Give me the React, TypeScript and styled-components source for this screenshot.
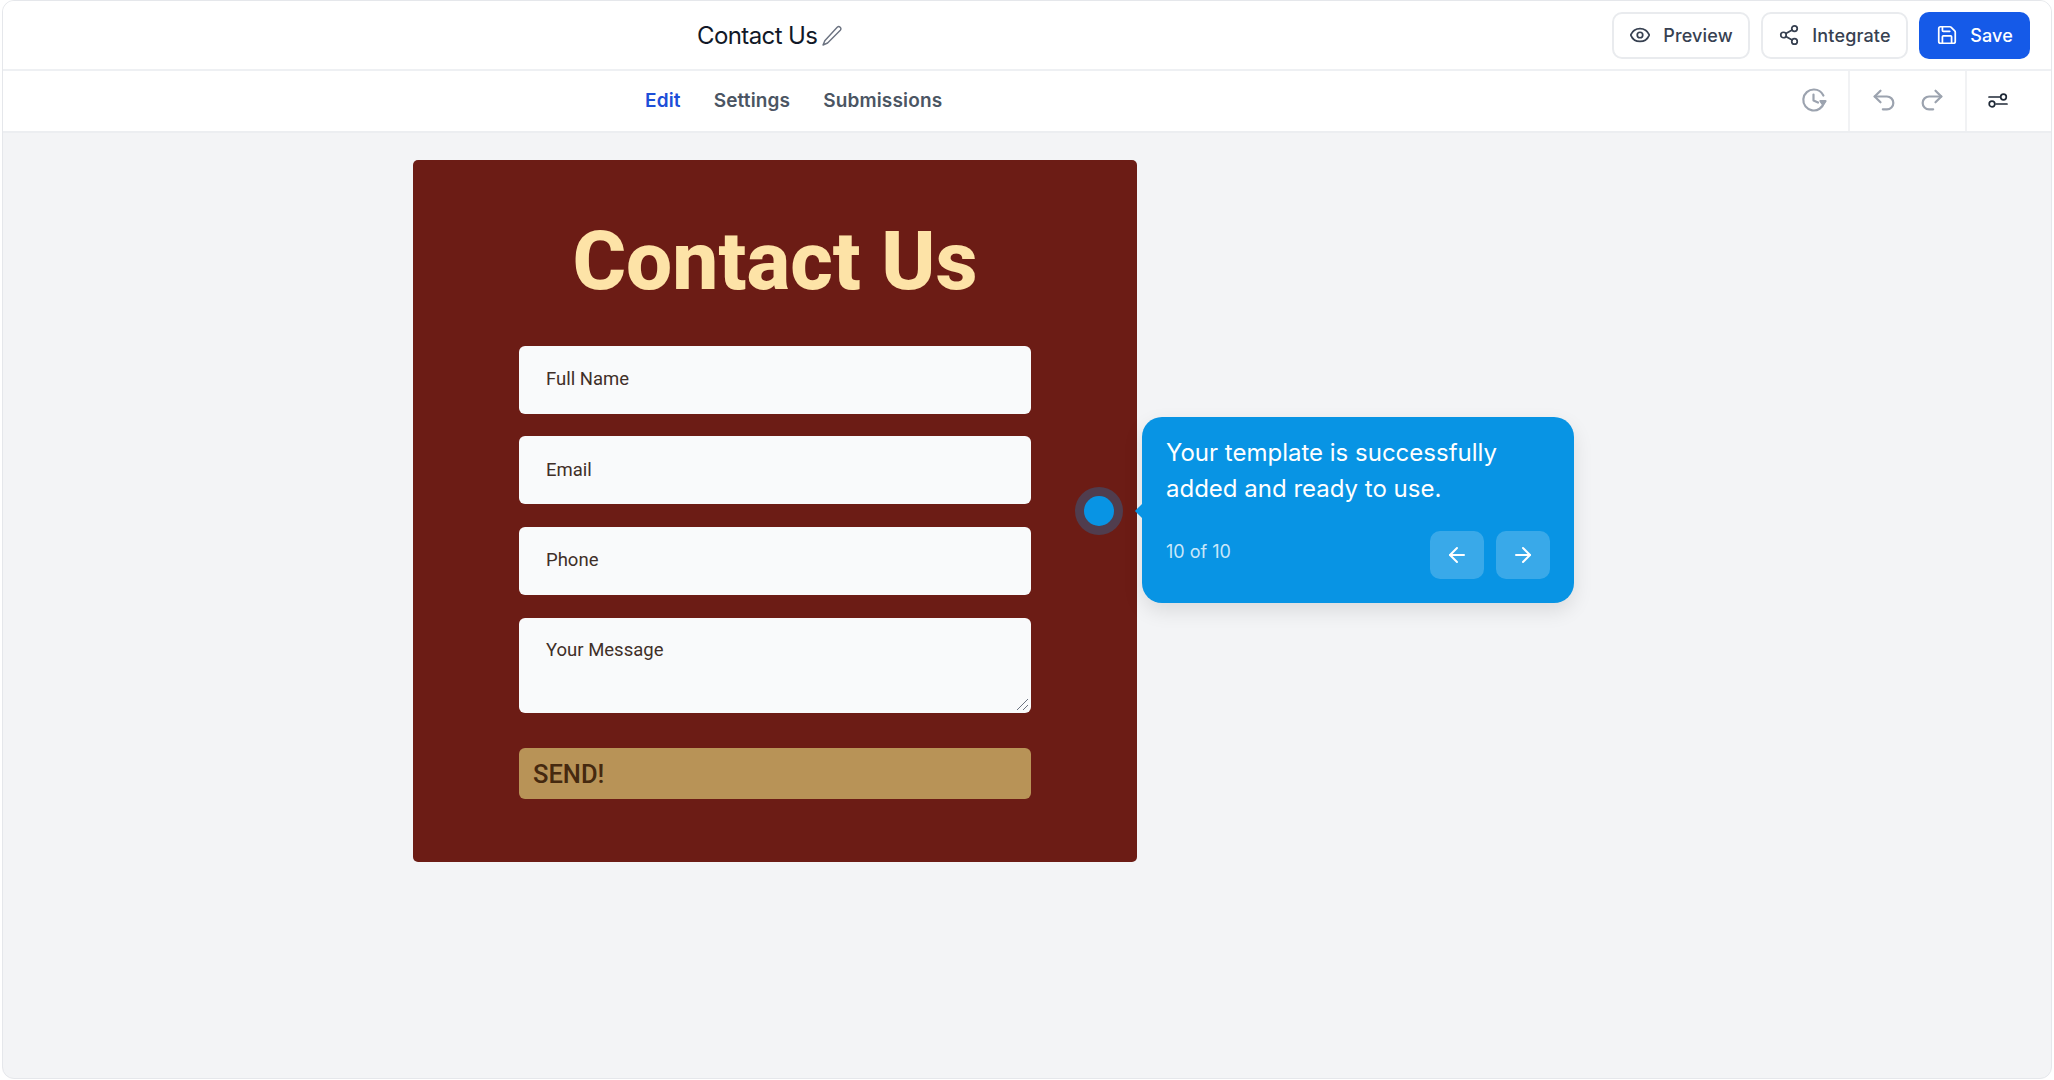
import React from "react";
import styled, { createGlobalStyle } from "styled-components";
import { ArrowLeft, ArrowRight, Eye, Redo2, Save, Share2, Undo2 } from "lucide-react";

const Global = createGlobalStyle`
  html, body { margin: 0; padding: 0; background: #fff; }
  body { font-family: Inter, "Liberation Sans", sans-serif; }
  * { box-sizing: border-box; }
`;

const Frame = styled.div`
  width: 2050px;
  height: 1079px;
  margin-left: 2px;
  border: 1px solid #e5e7eb;
  border-radius: 12px;
  overflow: hidden;
  display: flex;
  flex-direction: column;
  background: #f3f4f6;
`;

const Header = styled.header`
  height: 70px;
  flex: none;
  display: flex;
  align-items: center;
  justify-content: space-between;
  padding: 0 21px 0 694px;
  background: #fff;
  border-bottom: 2px solid #eef0f3;
`;

const TitleGroup = styled.div`
  display: flex;
  align-items: center;
  gap: 4px;
  padding-top: 2px;
  color: #111827;
`;

const PageTitle = styled.h1`
  margin: 0;
  font-size: 24px;
  line-height: 32px;
  font-weight: 400;
  letter-spacing: -0.6px;
`;

const Actions = styled.div`
  display: flex;
  gap: 11px;
`;

const ActionButton = styled.button<{ $primary?: boolean; $w: number }>`
  width: ${(p) => p.$w}px;
  height: 47px;
  display: flex;
  align-items: center;
  justify-content: center;
  gap: 12px;
  border-radius: 10px;
  border: ${(p) => (p.$primary ? "none" : "2px solid #e9ebee")};
  background: ${(p) => (p.$primary ? "#155ae8" : "#fff")};
  color: ${(p) => (p.$primary ? "#fff" : "#374151")};
  font-family: inherit;
  font-size: 18px;
  font-weight: 500;
  letter-spacing: 0.15px;
`;

const Toolbar = styled.nav`
  height: 62px;
  flex: none;
  display: flex;
  align-items: stretch;
  background: #fff;
  border-bottom: 2px solid #eceef1;
  padding-left: 642px;
`;

const Tabs = styled.div`
  display: flex;
  align-items: center;
  gap: 33px;
  flex: 1;
  padding-bottom: 2px;
`;

const Tab = styled.span<{ $active?: boolean }>`
  font-size: 19px;
  font-weight: 600;
  letter-spacing: 0.15px;
  color: ${(p) => (p.$active ? "#1d4ed8" : "#4b5563")};
`;

const ToolGroup = styled.div<{ $w: number; $gap?: number; $divider?: boolean; $insetRight?: number }>`
  width: ${(p) => p.$w}px;
  display: flex;
  align-items: center;
  justify-content: center;
  gap: ${(p) => p.$gap ?? 0}px;
  padding-right: ${(p) => p.$insetRight ?? 0}px;
  padding-bottom: 2px;
  border-right: ${(p) => (p.$divider ? "2px solid #f1f2f4" : "none")};
  color: #9ca3af;
`;

const Canvas = styled.main`
  flex: 1;
  position: relative;
  padding: 26.5px 0 0 410px;
`;

const FormCard = styled.form`
  width: 724px;
  height: 702px;
  background: #6c1c15;
  border-radius: 5px;
  padding: 49px 106px 0;
  display: flex;
  flex-direction: column;
`;

const FormTitle = styled.h2`
  margin: 0 0 33px;
  height: 104px;
  font-family: Roboto, sans-serif;
  font-size: 82px;
  line-height: 104px;
  font-weight: 800;
  text-align: center;
  color: #fde3a7;
`;

const Field = styled.div<{ $tall?: boolean }>`
  position: relative;
  height: ${(p) => (p.$tall ? 95 : 68)}px;
  margin-bottom: ${(p) => (p.$tall ? 35.5 : 22.7)}px;
  padding: ${(p) => (p.$tall ? "20px 27px 0" : "0 27px 1px")};
  display: flex;
  align-items: ${(p) => (p.$tall ? "flex-start" : "center")};
  background: #f9fafb;
  border-radius: 6px;
  font-family: Roboto, sans-serif;
  font-size: 18.5px;
  font-weight: 400;
  line-height: 24px;
  color: #3f2f28;
`;

const Grip = styled.svg`
  position: absolute;
  right: 2px;
  bottom: 2px;
`;

const SendButton = styled.button`
  height: 51px;
  padding: 0 14px;
  border: none;
  border-radius: 6px;
  background: #b89357;
  color: #45290f;
  font-family: Roboto, sans-serif;
  font-size: 25.5px;
  font-weight: 500;
  text-align: left;
`;

const Beacon = styled.span`
  position: absolute;
  left: 1072px;
  top: 354px;
  width: 48px;
  height: 48px;
  border-radius: 50%;
  background: rgba(8, 148, 228, 0.28);
  display: flex;
  align-items: center;
  justify-content: center;

  &::after {
    content: "";
    width: 30px;
    height: 30px;
    border-radius: 50%;
    background: #0894e4;
  }
`;

const Tour = styled.aside`
  position: absolute;
  left: 1139px;
  top: 284px;
  width: 432px;
  height: 186px;
  padding: 18px 24px 24px;
  border-radius: 20px;
  background: #0894e4;
  color: #fff;
  box-shadow: 0 8px 20px rgba(0, 0, 0, 0.1);
  display: flex;
  flex-direction: column;
  justify-content: space-between;

  &::before {
    content: "";
    position: absolute;
    left: -5px;
    top: 89px;
    width: 10px;
    height: 10px;
    background: #0894e4;
    transform: rotate(45deg);
  }
`;

const TourText = styled.p`
  margin: 0;
  font-size: 24px;
  line-height: 36px;
  font-weight: 400;
`;

const TourFooter = styled.div`
  display: flex;
  align-items: center;
  justify-content: space-between;
`;

const TourCount = styled.span`
  font-size: 18px;
  line-height: 24px;
  color: rgba(255, 255, 255, 0.8);
  margin-top: -6px;
`;

const TourNav = styled.div`
  display: flex;
  gap: 12px;
`;

const TourButton = styled.button`
  width: 54px;
  height: 48px;
  display: flex;
  align-items: center;
  justify-content: center;
  border: none;
  border-radius: 10px;
  background: rgba(255, 255, 255, 0.2);
  color: #fff;
`;

const PencilIcon = () => (
  <svg width="22" height="22" viewBox="0 0 22 22" fill="none" stroke="#6b7280" strokeWidth="1.4" strokeLinejoin="round">
    <path d="M16.2 2.2a2.2 2.2 0 0 1 3.1 3.1L6.6 18 2 20l2-4.6z" />
  </svg>
);

const HistoryIcon = () => (
  <svg width="26" height="26" viewBox="0 0 26 26" fill="none" stroke="currentColor" strokeWidth="2.2" strokeLinecap="round" strokeLinejoin="round">
    <path d="M23 15.5A10.5 10.5 0 1 1 13 2.5c4.2 0 7.6 2.4 9.4 6" />
    <path d="M12.5 7.5v6l4.5 2" />
    <path d="M19.5 14h5l-2.5 3.5z" fill="currentColor" />
  </svg>
);

const SlidersIcon = () => (
  <svg width="22" height="22" viewBox="0 0 22 22" fill="none" stroke="#1f2937" strokeWidth="1.7" strokeLinecap="round">
    <path d="M2 8h11" />
    <circle cx="16.5" cy="8" r="2.8" />
    <path d="M9 15h11" />
    <circle cx="5" cy="15" r="2.8" />
  </svg>
);

export default function App() {
  return (
    <>
      <Global />
      <Frame>
        <Header>
          <TitleGroup>
            <PageTitle>Contact Us</PageTitle>
            <PencilIcon />
          </TitleGroup>
          <Actions>
            <ActionButton type="button" $w={138}>
              <Eye size={22} strokeWidth={1.9} />
              Preview
            </ActionButton>
            <ActionButton type="button" $w={147}>
              <Share2 size={22} strokeWidth={1.9} />
              Integrate
            </ActionButton>
            <ActionButton type="button" $primary $w={111}>
              <Save size={22} strokeWidth={1.9} />
              Save
            </ActionButton>
          </Actions>
        </Header>
        <Toolbar>
          <Tabs>
            <Tab $active>Edit</Tab>
            <Tab>Settings</Tab>
            <Tab>Submissions</Tab>
          </Tabs>
          <ToolGroup $w={70} $divider>
            <HistoryIcon />
          </ToolGroup>
          <ToolGroup $w={117} $gap={20} $divider>
            <Undo2 size={28} strokeWidth={1.9} />
            <Redo2 size={28} strokeWidth={1.9} />
          </ToolGroup>
          <ToolGroup $w={84} $insetRight={22}>
            <SlidersIcon />
          </ToolGroup>
        </Toolbar>
        <Canvas>
          <FormCard>
            <FormTitle>Contact Us</FormTitle>
            <Field>Full Name</Field>
            <Field>Email</Field>
            <Field>Phone</Field>
            <Field $tall>
              Your Message
              <Grip width="14" height="14" viewBox="0 0 14 14" fill="none" stroke="#6b7280" strokeWidth="1">
                <path d="M2 13 13 2M8 13l5-5" />
              </Grip>
            </Field>
            <SendButton type="button">SEND!</SendButton>
          </FormCard>
          <Beacon />
          <Tour>
            <TourText>
              Your template is successfully
              <br />
              added and ready to use.
            </TourText>
            <TourFooter>
              <TourCount>10 of 10</TourCount>
              <TourNav>
                <TourButton type="button">
                  <ArrowLeft size={24} strokeWidth={2} />
                </TourButton>
                <TourButton type="button">
                  <ArrowRight size={24} strokeWidth={2} />
                </TourButton>
              </TourNav>
            </TourFooter>
          </Tour>
        </Canvas>
      </Frame>
    </>
  );
}
